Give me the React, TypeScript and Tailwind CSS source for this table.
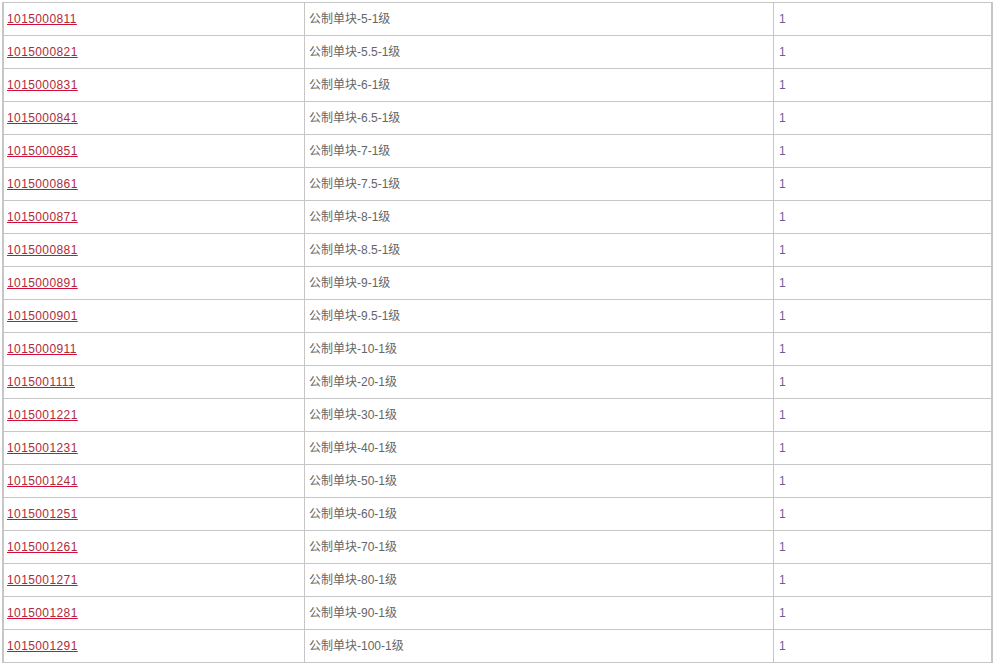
const rows: [string, string][] = [
  ["1015000811", "5"],
  ["1015000821", "5.5"],
  ["1015000831", "6"],
  ["1015000841", "6.5"],
  ["1015000851", "7"],
  ["1015000861", "7.5"],
  ["1015000871", "8"],
  ["1015000881", "8.5"],
  ["1015000891", "9"],
  ["1015000901", "9.5"],
  ["1015000911", "10"],
  ["1015001111", "20"],
  ["1015001221", "30"],
  ["1015001231", "40"],
  ["1015001241", "50"],
  ["1015001251", "60"],
  ["1015001261", "70"],
  ["1015001271", "80"],
  ["1015001281", "90"],
  ["1015001291", "100"],
];

export default function App() {
  return (
    <div className="min-h-[666px] bg-white pt-[2px] pl-[2px] font-['Liberation_Sans','Noto_Sans_CJK_SC',sans-serif] text-[12px]">
      <div className="w-[991px] border-t border-l-2 border-r-2 border-[#c6c6c6]">
        {rows.map(([code, size]) => (
          <div key={code} className="flex h-[33px] border-b border-[#c6c6c6]">
            <div className="flex w-[301px] items-center border-r border-[#c6c6c6] pl-[3px]">
              <a href="#" className="tracking-[0.4px] text-[#b02a3a] underline decoration-[#d0103a]">
                {code}
              </a>
            </div>
            <div className="flex w-[469px] items-center border-r border-[#c6c6c6] pl-[4px] text-[#666]">
              公制单块-{size}-1级
            </div>
            <div className="flex flex-1 items-center pl-[5px] text-[#6b5e94]">1</div>
          </div>
        ))}
      </div>
    </div>
  );
}
